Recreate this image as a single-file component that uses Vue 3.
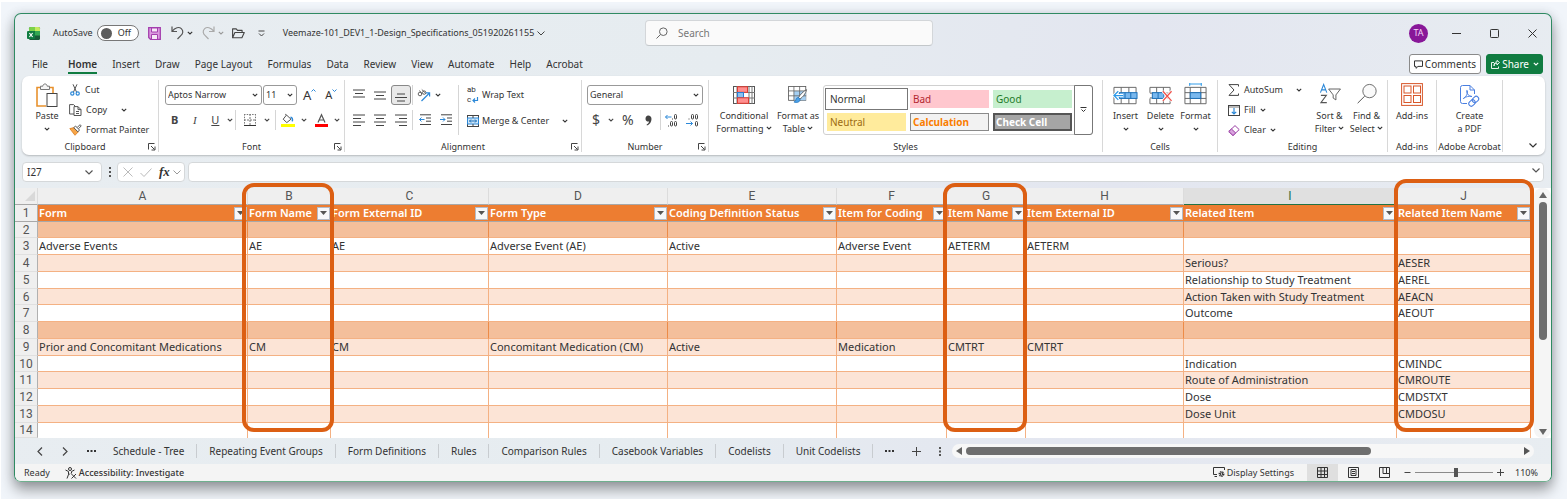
<script setup>
import { h, ref } from 'vue'

const Chev = () =>
  h('svg', { class: 'chev', viewBox: '0 0 6 4', width: 6, height: 4, 'aria-hidden': 'true' }, [
    h('path', { d: 'M.8.8 3 3 5.2.8', fill: 'none', stroke: 'currentColor', 'stroke-width': 1.1 }),
  ])

const Launcher = () =>
  h('svg', { class: 'launcher', viewBox: '0 0 8 8', width: 8, height: 8, 'aria-hidden': 'true' }, [
    h('path', { d: 'M.5 6.5v-6h6M3 3l3.500 3.500M7 3.500V7H3.500', fill: 'none', stroke: '#444', 'stroke-width': 1 }),
  ])

const ribbonTabs = ['File', 'Home', 'Insert', 'Draw', 'Page Layout', 'Formulas', 'Data', 'Review', 'View', 'Automate', 'Help', 'Acrobat']
const activeTab = ref('Home')
const autoSave = ref(false)
const zoom = ref(110)

const vertical = [
  { name: 'Top Align', d: 'M0 2h12M2 5.500h8M0 9h12', on: false },
  { name: 'Middle Align', d: 'M0 4h12M2 7.500h8M0 11h12', on: false },
  { name: 'Bottom Align', d: 'M2 6h8M0 9.500h12M2 13h8', on: true },
]
const horizontal = [
  { name: 'Align Left', d: 'M0 2h12M0 5.500h8M0 9h12M0 12.500h8' },
  { name: 'Center', d: 'M0 2h12M2 5.500h8M0 9h12M2 12.500h8' },
  { name: 'Align Right', d: 'M0 2h12M4 5.500h8M0 9h12M4 12.500h8' },
]
const cellStyles = ['Normal', 'Bad', 'Good', 'Neutral', 'Calculation', 'Check Cell']

const columns = [
  { id: 'A', title: 'Form', width: 210 },
  { id: 'B', title: 'Form Name', width: 83, mark: true },
  { id: 'C', title: 'Form External ID', width: 158 },
  { id: 'D', title: 'Form Type', width: 179 },
  { id: 'E', title: 'Coding Definition Status', width: 169 },
  { id: 'F', title: 'Item for Coding', width: 110 },
  { id: 'G', title: 'Item Name', width: 79, mark: true },
  { id: 'H', title: 'Item External ID', width: 158 },
  { id: 'I', title: 'Related Item', width: 213 },
  { id: 'J', title: 'Related Item Name', width: 134, mark: true },
]
const rows = [
  { n: 2, tone: 'dark' },
  { n: 3, tone: 'plain', A: 'Adverse Events', B: 'AE', C: 'AE', D: 'Adverse Event (AE)', E: 'Active', F: 'Adverse Event', G: 'AETERM', H: 'AETERM' },
  { n: 4, tone: 'band', I: 'Serious?', J: 'AESER' },
  { n: 5, tone: 'plain', I: 'Relationship to Study Treatment', J: 'AEREL' },
  { n: 6, tone: 'band', I: 'Action Taken with Study Treatment', J: 'AEACN' },
  { n: 7, tone: 'plain', I: 'Outcome', J: 'AEOUT' },
  { n: 8, tone: 'dark' },
  { n: 9, tone: 'band', A: 'Prior and Concomitant Medications', B: 'CM', C: 'CM', D: 'Concomitant Medication (CM)', E: 'Active', F: 'Medication', G: 'CMTRT', H: 'CMTRT' },
  { n: 10, tone: 'plain', I: 'Indication', J: 'CMINDC' },
  { n: 11, tone: 'band', I: 'Route of Administration', J: 'CMROUTE' },
  { n: 12, tone: 'plain', I: 'Dose', J: 'CMDSTXT' },
  { n: 13, tone: 'band', I: 'Dose Unit', J: 'CMDOSU' },
  { n: 14, tone: 'last' },
]
const sheets = ['Schedule - Tree', 'Repeating Event Groups', 'Form Definitions', 'Rules', 'Comparison Rules', 'Casebook Variables', 'Codelists', 'Unit Codelists']
</script>

<template>
  <div class="desk">
    <div class="window">
      <header class="titlebar">
        <div class="quick">
          <svg class="logo" viewBox="0 0 13 13" width="13" height="13" aria-hidden="true">
            <rect x="2" width="11" height="13" rx="1.500" fill="#185c37" />
            <path d="M2 1.500Q2 0 3.500 0H8v4H2z" fill="#7bd14a" />
            <path d="M8 0h3.500Q13 0 13 1.500V4H8z" fill="#c4ea5e" />
            <path d="M8 4h5v4.500H8z" fill="#33a852" />
            <rect y="4" width="8" height="8" rx="1" fill="#107c41" />
            <path d="M2.400 6l3.200 4M5.600 6l-3.200 4" stroke="#fff" stroke-width="1.200" />
          </svg>
          <label class="autosave">AutoSave
            <span class="switch"><input v-model="autoSave" type="checkbox" role="switch" /><i></i><b>{{ autoSave ? 'On' : 'Off' }}</b></span>
          </label>
          <button class="save" aria-label="Save">
            <svg viewBox="0 0 13 13" width="13" height="13"><path d="M.7.700h11.600v11.600H2.500L.7 10.500z" fill="#dc9be0" stroke="#a43fae" stroke-width="1.300" /><path d="M3.500 1h6v4h-6z" fill="#f6e8f7" stroke="#a43fae" /><path d="M3.500 12V7.500h6V12" fill="#f6e8f7" stroke="#a43fae" /></svg>
          </button>
          <button class="undo" aria-label="Undo">
            <svg viewBox="0 0 13 14" width="13" height="14"><path d="M1 .5v5h5M1.300 5.200C4 1.500 8 .5 10.300 2.600c2.500 2.300 1.500 5.200-.3 6.800L6.500 13" fill="none" stroke="#555" stroke-width="1.200" /></svg>
            <Chev />
          </button>
          <button class="redo" aria-label="Redo">
            <svg viewBox="0 0 13 14" width="13" height="14"><path d="M12 .5v5H7M11.700 5.200C9 1.500 5 .5 2.700 2.600.2 4.900 1.200 7.800 3 9.400L6.500 13" fill="none" stroke="#aaa" stroke-width="1.200" /></svg>
            <Chev />
          </button>
          <button class="open" aria-label="Open">
            <svg viewBox="0 0 13 11" width="13" height="11"><path d="M.6 9.800V.9h3.600l1.300 1.500h4.600v2.100M.6 9.800l2.300-5.300h9.400l-2.400 5.300z" fill="none" stroke="#444" stroke-width="1.100" stroke-linejoin="round" /></svg>
          </button>
          <button class="more" aria-label="Customize Quick Access Toolbar">
            <svg viewBox="0 0 7 7" width="7" height="7"><path d="M.5 1h6M1 3.500 3.500 6 6 3.500" fill="none" stroke="#444" /></svg>
          </button>
          <button class="file">Veemaze-101_DEV1_1-Design_Specifications_051920261155
            <svg viewBox="0 0 8 5" width="8" height="5"><path d="M.5.500 4 4 7.500.500" fill="none" stroke="#444" /></svg>
          </button>
        </div>
        <label class="search">
          <svg viewBox="0 0 12 12" width="12" height="12"><circle cx="7.300" cy="4.700" r="3.800" fill="none" stroke="#666" /><path d="M4.500 7.500.500 11.500" stroke="#666" /></svg>
          <input type="text" placeholder="Search" aria-label="Search" />
        </label>
        <div class="controls">
          <button class="avatar">TA</button>
          <button aria-label="Minimize"><svg viewBox="0 0 9 9" width="9" height="9"><path d="M0 4.500h9" stroke="#333" /></svg></button>
          <button aria-label="Maximize"><svg viewBox="0 0 9 9" width="9" height="9"><rect x=".5" y=".5" width="8" height="8" rx=".8" fill="none" stroke="#333" /></svg></button>
          <button aria-label="Close"><svg viewBox="0 0 9 9" width="9" height="9"><path d="M.5.500l8 8M8.500.500l-8 8" stroke="#333" /></svg></button>
        </div>
      </header>

      <nav class="tabs">
        <button v-for="t in ribbonTabs" :key="t" :class="{ active: t === activeTab }" @click="activeTab = t">{{ t }}</button>
        <button class="comments">
          <svg viewBox="0 0 9 9" width="9" height="9"><path d="M.5.900h8v5.500H4L2 8.300V6.400H.5z" fill="none" stroke="#333" /></svg>Comments
        </button>
        <button class="share">
          <svg viewBox="0 0 9 9" width="9" height="9"><path d="M3 2.500H.5v6h7V6.500M3 6c.2-2 1.200-2.800 3-2.800V5l2.500-2.500L6 .4v1.500C3.800 1.900 3 3.500 3 6z" fill="none" stroke="#fff" stroke-width=".9" /></svg>Share<Chev />
        </button>
      </nav>

      <section class="ribbon">
        <div class="group clipboard">
          <div class="body">
            <button class="big">
              <svg viewBox="0 0 24 26" width="24" height="26"><path d="M7 4.500H2V23h9" fill="#fff" stroke="#e8912d" stroke-width="1.600" /><path d="M13 4.500h5V10" fill="none" stroke="#e8912d" stroke-width="1.600" /><path d="M5.500 3.200h2.300C8 .2 12 .2 12.200 3.200h2.300v3.300h-9z" fill="#f5f5f5" stroke="#777" /><rect x="12" y="10.500" width="10" height="13" fill="#fff" stroke="#444" /></svg>
              <span>Paste</span><Chev />
            </button>
            <div class="stack">
              <button><svg viewBox="0 0 12 12" width="12" height="12"><path d="M4 .3 7.500 8M8 .3 4.500 8" stroke="#555" fill="none" /><circle cx="3.300" cy="9.500" r="1.600" fill="none" stroke="#2b88d8" stroke-width="1.200" /><circle cx="8.700" cy="9.500" r="1.600" fill="none" stroke="#2b88d8" stroke-width="1.200" /></svg>Cut</button>
              <button><svg viewBox="0 0 13 12" width="13" height="12"><path d="M5 10H.6V.6h4l2 2M5 2.600h4l3 3v5.900H5zM9 2.600v3h3M7 7.500h3M7 9.500h3" fill="none" stroke="#555" /></svg>Copy<Chev class="far" /></button>
              <button><svg viewBox="0 0 13 12" width="13" height="12"><path d="M.8 4.600 5 3.600l4.300 4.200L6 11.300z" fill="#f7a649" stroke="#d97a1b" stroke-width=".8" /><path d="M4.800 3.700 6.500 2l4 4-1.600 1.800zM8.300 3.400 11 .7l1.200 1.200-2.500 2.700" fill="#fff" stroke="#444" stroke-width=".9" /></svg>Format Painter</button>
            </div>
          </div>
          <div class="name">Clipboard</div><Launcher />
        </div>

        <div class="group font">
          <div class="body">
            <div class="line">
              <span class="pick face"><select aria-label="Font"><option>Aptos Narrow</option></select><Chev /></span>
              <span class="pick size"><select aria-label="Font Size"><option>11</option></select><Chev /></span>
              <button class="grow" aria-label="Increase Font Size"><span>A</span><svg viewBox="0 0 5 3" width="5" height="3"><path d="M.5 2.500l2-2 2 2" fill="none" stroke="#2b88d8" /></svg></button>
              <button class="shrink" aria-label="Decrease Font Size"><span>A</span><svg viewBox="0 0 5 3" width="5" height="3"><path d="M.5.500l2 2 2-2" fill="none" stroke="#2b88d8" /></svg></button>
            </div>
            <div class="line marks">
              <button class="glyph"><b>B</b></button>
              <button class="glyph"><i>I</i></button>
              <button class="glyph"><u>U</u><Chev /></button>
              <hr />
              <button class="glyph" aria-label="Borders"><svg viewBox="0 0 12 12" width="12" height="12"><path d="M.5 0v12M11.500 0v12M0 .5h12" stroke="#777" stroke-dasharray="1.500 1.200" /><path d="M6 0v12M0 6h12" stroke="#777" stroke-dasharray="2 1" /><path d="M0 11.500h12" stroke="#333" stroke-width="1.200" /></svg><Chev /></button>
              <hr />
              <button class="glyph" aria-label="Fill Color"><svg viewBox="0 0 14 13" width="14" height="13"><path d="M5.500 1 10 5.200 5.800 8.600 2.200 5.200zM5.500 1 4.200.2" fill="#fff" stroke="#555" /><path d="M9.500 3.200c1.800.3 2.300 1.800 1.800 4.200" fill="none" stroke="#2b88d8" stroke-width="1.500" /><rect y="10" width="14" height="3" fill="#ff0" /></svg><Chev /></button>
              <button class="glyph" aria-label="Font Color"><svg viewBox="0 0 13 13" width="13" height="13"><path d="M3 8.500 6.500.700 10 8.500M4.200 6h4.600" fill="none" stroke="#555" stroke-width="1.200" /><rect y="10" width="13" height="3" fill="#f00" /></svg><Chev /></button>
            </div>
          </div>
          <div class="name">Font</div><Launcher />
        </div>

        <div class="group align">
          <div class="body">
            <div class="pad">
              <button v-for="a in vertical" :key="a.name" class="tool" :class="{ on: a.on }" :aria-label="a.name"><svg viewBox="0 0 12 14" width="12" height="14"><path :d="a.d" stroke="#444" /></svg></button>
              <hr />
              <button class="tool wide" aria-label="Orientation"><svg viewBox="0 0 14 13" width="14" height="13"><g fill="none" stroke="#555" stroke-width=".9"><circle cx="3" cy="5" r="1.800" /><path d="M2.500 1.500 5 5" /><path d="M4.800.500l3.700 3.700" /><circle cx="7.200" cy="3.600" r="1.700" /></g><path d="M4.500 12 12.500 4M9 3.800h3.600v3.600" fill="none" stroke="#2b88d8" stroke-width="1.200" /></svg><Chev /></button>
              <button v-for="a in horizontal" :key="a.name" class="tool" :aria-label="a.name"><svg viewBox="0 0 12 14" width="12" height="14"><path :d="a.d" stroke="#444" /></svg></button>
              <hr />
              <div class="indents">
                <button class="tool" aria-label="Decrease Indent"><svg viewBox="0 0 12 12" width="12" height="12"><path d="M1 .8h11M7 4h5M7 7.200h5M1 10.500h11" stroke="#444" /><path d="M.5 5.500h5M2.500 3.500l-2 2 2 2" fill="none" stroke="#2b88d8" /></svg></button>
                <button class="tool" aria-label="Increase Indent"><svg viewBox="0 0 12 12" width="12" height="12"><path d="M1 .8h11M7 4h5M7 7.200h5M1 10.500h11" stroke="#444" /><path d="M0 5.500h5M3 3.500l2 2-2 2" fill="none" stroke="#2b88d8" /></svg></button>
              </div>
            </div>
            <hr class="tall" />
            <div class="wraps">
              <button><span class="abc"><span>ab</span><span class="turn">c<svg viewBox="0 0 7 6" width="7" height="6"><path d="M5.500 0v3.500H1M3 1.500l-2 2 2 2" fill="none" stroke="#2b88d8" stroke-width="1.200" /></svg></span></span>Wrap Text</button>
              <button><svg viewBox="0 0 12 12" width="12" height="12"><rect x=".5" y=".5" width="11" height="11" fill="#fff" stroke="#444" /><rect x=".5" y="3" width="11" height="6" fill="#cfe6f8" stroke="#2b88d8" /><path d="M6 0v3M6 9v3" stroke="#444" /><path d="M2.500 6h7M4 4.500 2.500 6 4 7.500M8 4.500 9.500 6 8 7.500" fill="none" stroke="#1a6fb8" /></svg>Merge &amp; Center<Chev class="far" /></button>
            </div>
          </div>
          <div class="name">Alignment</div><Launcher />
        </div>

        <div class="group number">
          <div class="body">
            <span class="pick"><select aria-label="Number Format"><option>General</option></select><Chev /></span>
            <div class="line marks">
              <button class="sign">$</button><Chev />
              <button class="sign">%</button>
              <button class="sign comma" aria-label="Comma Style"><svg viewBox="0 0 7 11" width="7" height="11"><path d="M3.200.500c2 0 3.300 1.200 3.300 3.500 0 3-1.700 5.300-4.500 6.500l-.5-.8c1.500-.8 2.400-1.900 2.500-3.200-2 .4-3.500-.8-3.500-2.800C.5 1.800 1.600.500 3.200.500z" fill="#444" /></svg></button>
              <hr />
              <button class="deci" aria-label="Increase Decimal"><svg viewBox="0 0 13 13" width="13" height="13"><g fill="none" stroke="#444"><rect x="9.500" y=".5" width="2" height="4.500" rx="1" /><rect x="5.500" y="7.500" width="2" height="4.500" rx="1" /><rect x="9.500" y="7.500" width="2" height="4.500" rx="1" /><path d="M7 5h1M3 12h1" /></g><path d="M6.500 3h-6M2.500 1l-2 2 2 2" fill="none" stroke="#2b88d8" /></svg></button>
              <button class="deci" aria-label="Decrease Decimal"><svg viewBox="0 0 13 13" width="13" height="13"><g fill="none" stroke="#444"><rect x="5.500" y=".5" width="2" height="4.500" rx="1" /><rect x="9.500" y=".5" width="2" height="4.500" rx="1" /><rect x="9.500" y="7.500" width="2" height="4.500" rx="1" /><path d="M2.500 5h1" /></g><path d="M0 9.500h6.500M4.500 7.500l2 2-2 2" fill="none" stroke="#2b88d8" /></svg></button>
            </div>
          </div>
          <div class="name">Number</div><Launcher />
        </div>

        <div class="group styles">
          <div class="body">
            <button class="big two">
              <svg viewBox="0 0 22 18" width="22" height="18"><rect x=".5" y=".5" width="21" height="17" fill="#fff" stroke="#555" /><path d="M0 6.500h22M0 12h22M16 0v18M19 0v18M4 0v18" stroke="#777" /><rect x="4.500" y=".8" width="10" height="5.500" fill="#ff8f8f" stroke="#e03c32" /><rect x="4.500" y="6.500" width="6" height="5" fill="#8cc1ee" stroke="#2b7cd3" /><rect x="4.500" y="11.800" width="11" height="5.500" fill="#ff8f8f" stroke="#e03c32" /></svg>
              <span>Conditional<br />Formatting <Chev /></span>
            </button>
            <button class="big two">
              <svg viewBox="0 0 24 22" width="24" height="22"><rect x=".5" y=".5" width="21" height="17" fill="#fff" stroke="#555" /><rect x="7" y="6" width="14.500" height="11.500" fill="#a5cff2" /><path d="M0 6h22M0 12h22M7 0v18M14 0v18" stroke="#666" /><path d="M22.500 4.500c-4 2-8 6-10 10l1.800 1.500c3.700-2.500 7-6.500 8.200-11.500z" fill="#fff" stroke="#444" stroke-width=".9" /><path d="M12.500 14.200c-2.500-.3-3 1.800-3.300 3.300-.3 1-1.200 1.700-2.200 2 3.500 1.500 7.500.5 7.600-3.300z" fill="#4ba0e8" stroke="#1a6fb8" stroke-width=".8" /></svg>
              <span>Format as<br />Table <Chev /></span>
            </button>
            <div class="gallery">
              <div class="swatches"><button v-for="s in cellStyles" :key="s" :class="s.toLowerCase().replace(' ', '-')">{{ s }}</button></div>
              <button class="expand" aria-label="More styles"><svg viewBox="0 0 7 6" width="7" height="6"><path d="M.5.500h6M1.500 2.500l2 2 2-2" fill="none" stroke="#333" /></svg></button>
            </div>
          </div>
          <div class="name">Styles</div>
        </div>

        <div class="group cells">
          <div class="body">
            <button class="big">
              <svg viewBox="0 0 25 26" width="25" height="26"><path d="M.5 3.500h23v17H.5zM8 3.500v17M16 3.500v17" fill="#fff" stroke="#666" /><rect x="6" y="9" width="18.500" height="6" fill="#79b8ee" stroke="#1a6fb8" /><path d="M12 9v6M18 9v6" stroke="#1a6fb8" /><path d="M10 12H1M5 7.500.500 12 5 16.500" fill="none" stroke="#fff" stroke-width="3" /><path d="M10 12H1M5 7.500.500 12 5 16.500" fill="none" stroke="#2b99e8" stroke-width="1.300" /></svg>
              <span>Insert</span><Chev />
            </button>
            <button class="big">
              <svg viewBox="0 0 25 26" width="25" height="26"><path d="M1.500 3.500h21v17h-21zM8.500 3.500v17M15.500 3.500v17" fill="#fff" stroke="#666" /><path d="M0 9h25v6H0z" fill="#fff" /><path d="M1.500 9.500h21M1.500 14.500h21" stroke="#666" /><rect x="4" y="9" width="12" height="6" fill="#79b8ee" stroke="#1a6fb8" /><path d="M10 9v6" stroke="#1a6fb8" /><path d="M15 7.500l9 10M24 7.500l-9 10" stroke="#fff" stroke-width="3" /><path d="M15 7.500l9 10M24 7.500l-9 10" stroke="#f0504a" stroke-width="1.300" /></svg>
              <span>Delete</span><Chev />
            </button>
            <button class="big">
              <svg viewBox="0 0 25 26" width="25" height="26"><path d="M1.500 3.500h22v17h-22zM7 3.500v17M18 3.500v17M1.500 9h22M1.500 15h22" fill="#fff" stroke="#666" /><rect x="7" y="9" width="11" height="6" fill="#79b8ee" stroke="#1a6fb8" /><path d="M6 0h13M6.500-1v3M18.500-1v3" stroke="#2b99e8" /></svg>
              <span>Format</span><Chev />
            </button>
          </div>
          <div class="name">Cells</div>
        </div>

        <div class="group editing">
          <div class="body">
            <div class="stack">
              <button><svg viewBox="0 0 12 12" width="12" height="12"><path d="M10.500 2.500V.6H1l5 5.400-5 5.400h9.500V9.500" fill="none" stroke="#444" /></svg>AutoSum<Chev class="far" /></button>
              <button><svg viewBox="0 0 12 11" width="12" height="11"><rect x=".5" y=".5" width="11" height="10" fill="#fff" stroke="#444" /><path d="M1 2h10" stroke="#777" /><path d="M6 3v6M3.800 6.800 6 9l2.200-2.200" fill="none" stroke="#2b88d8" stroke-width="1.200" /></svg>Fill<Chev /></button>
              <button><svg viewBox="0 0 12 11" width="12" height="11"><path d="M.8 6.500 7 .6l4.200 4L5 10.500z" fill="#fff" stroke="#9b3fa5" /><path d="M.8 6.500 3.500 4l4.200 4L5 10.500z" fill="#d9a3de" stroke="#9b3fa5" /></svg>Clear<Chev /></button>
            </div>
            <button class="big two">
              <svg viewBox="0 0 24 22" width="24" height="22"><path d="M1.500 9.500 5 .6l3.500 8.900M2.800 6.500h4.400" fill="none" stroke="#2b88d8" stroke-width="1.200" /><path d="M2 12.500h6L2 20.500h6.500" fill="none" stroke="#555" stroke-width="1.200" /><path d="M10.500 5.500h13L18.500 12v5.500l-3-2V12z" fill="#fff" stroke="#555" /></svg>
              <span>Sort &amp;<br />Filter <Chev /></span>
            </button>
            <button class="big two">
              <svg viewBox="0 0 24 24" width="24" height="24"><circle cx="15" cy="8.500" r="8" fill="#fafafa" stroke="#555" /><path d="M9.300 14.500.800 23" stroke="#555" stroke-width="1.200" /></svg>
              <span>Find &amp;<br />Select <Chev /></span>
            </button>
          </div>
          <div class="name">Editing</div>
        </div>

        <div class="group addins">
          <div class="body">
            <button class="big two">
              <svg viewBox="0 0 22 23" width="22" height="23"><g fill="#fff" stroke="#d8572a"><rect x=".6" y=".6" width="20.800" height="21.800" /><rect x="3" y="3" width="7" height="7" /><rect x="12.500" y="3" width="7" height="7" /><rect x="3" y="12.500" width="7" height="7" /><rect x="12.500" y="12.500" width="7" height="7" /></g></svg>
              <span>Add-ins</span>
            </button>
          </div>
          <div class="name">Add-ins</div>
        </div>

        <div class="group acrobat">
          <div class="body">
            <button class="big two">
              <svg viewBox="0 0 22 23" width="22" height="23"><g fill="none" stroke="#4a7fe0"><path d="M8 18.500H3.500q-2 0-2-2V2.500q0-2 2-2H11l4.500 4.500v4M11 .5v4.500h4.500" /><path d="M4.500 13.500c2.500-1.500 4.500-5 4-7.500-.2-1-1.200-.8-1 .3.400 2.700 2 4.700 5.500 5.200-3.500-.6-6 .3-8 1.500-1 .6-1 1-.5.500z" stroke-width=".9" /><rect x="14" y="11" width="5" height="7" rx="2.500" transform="rotate(45 16.500 14.500)" /><rect x="10.500" y="14.500" width="5" height="7" rx="2.500" transform="rotate(45 13 18)" /></g></svg>
              <span>Create<br />a PDF</span>
            </button>
          </div>
          <div class="name">Adobe Acrobat</div>
        </div>
        <button class="collapse" aria-label="Collapse the Ribbon"><svg viewBox="0 0 8 5" width="8" height="5"><path d="M.5.500 4 4 7.500.500" fill="none" stroke="#333" stroke-width="1.200" /></svg></button>
      </section>

      <section class="formula">
        <label class="namebox"><input type="text" value="I27" aria-label="Name Box" /><svg viewBox="0 0 8 5" width="8" height="5"><path d="M.5.500 4 4 7.500.500" fill="none" stroke="#555" stroke-width="1.200" /></svg></label>
        <svg class="dots" viewBox="0 0 15 10" width="15" height="10"><path d="M7 0h2v2H7zM7 4h2v2H7zM7 8h2v2H7z" fill="#555" /></svg>
        <div class="fx">
          <button aria-label="Cancel"><svg viewBox="0 0 10 10" width="10" height="10"><path d="M.5.500l9 9M9.500.500l-9 9" stroke="#bbb" /></svg></button>
          <button aria-label="Enter"><svg viewBox="0 0 12 9" width="12" height="9"><path d="M.5 5l3.500 3.500L11.500.500" fill="none" stroke="#bbb" /></svg></button>
          <button class="fn" aria-label="Insert Function"><i>fx</i><svg viewBox="0 0 8 5" width="8" height="5"><path d="M.5.500 4 4 7.500.500" fill="none" stroke="#999" /></svg></button>
        </div>
        <label class="entry"><input type="text" aria-label="Formula Bar" /><svg viewBox="0 0 8 5" width="8" height="5"><path d="M.5.500 4 4 7.500.500" fill="none" stroke="#555" stroke-width="1.200" /></svg></label>
      </section>

      <section class="sheet">
        <table>
          <colgroup>
            <col class="gutter" />
            <col v-for="c in columns" :key="c.id" :style="{ width: c.width + 'px' }" />
            <col class="rest" />
          </colgroup>
          <thead>
            <tr class="letters">
              <th class="corner"><svg viewBox="0 0 10 10" width="10" height="10"><path d="M10 0v10H0z" fill="#d9d9d9" /></svg></th>
              <th v-for="c in columns" :key="c.id" scope="col" :class="{ picked: c.id === 'I' }">{{ c.id }}<span v-if="c.mark" class="mark" :class="'mark-' + c.id.toLowerCase()"></span></th>
              <th></th>
            </tr>
          </thead>
          <tbody>
            <tr class="titles">
              <th scope="row">1</th>
              <td v-for="c in columns" :key="c.id"><div class="cap">{{ c.title }}<button :aria-label="'Filter ' + c.title"><svg viewBox="0 0 7 4" width="7" height="4"><path d="M0 0h7L3.500 4z" fill="#555" /></svg></button></div></td>
              <td class="blank"></td>
            </tr>
            <tr v-for="r in rows" :key="r.n" :class="r.tone">
              <th scope="row">{{ r.n }}</th>
              <td v-for="c in columns" :key="c.id">{{ r[c.id] }}</td>
              <td class="blank"></td>
            </tr>
          </tbody>
        </table>
        <div class="vbar">
          <svg viewBox="0 0 8 6" width="8" height="6"><path d="M4 0l4 6H0z" fill="#666" /></svg>
          <div class="track"><div class="thumb"></div></div>
          <svg viewBox="0 0 8 6" width="8" height="6"><path d="M4 6l4-6H0z" fill="#666" /></svg>
        </div>
      </section>

      <section class="sheets">
        <div class="nav">
          <button aria-label="Previous sheet"><svg viewBox="0 0 6 9" width="6" height="9"><path d="M5 .5l-4 4 4 4" fill="none" stroke="#444" stroke-width="1.200" /></svg></button>
          <button aria-label="Next sheet"><svg viewBox="0 0 6 9" width="6" height="9"><path d="M1 .5l4 4-4 4" fill="none" stroke="#444" stroke-width="1.200" /></svg></button>
          <button aria-label="More sheets to the left"><svg viewBox="0 0 9 2" width="9" height="2"><path d="M0 0h2v2H0zM3.500 0h2v2h-2zM7 0h2v2H7z" fill="#333" /></svg></button>
        </div>
        <button v-for="s in sheets" :key="s" class="leaf">{{ s }}</button>
        <div class="tail">
          <button aria-label="More sheets"><svg viewBox="0 0 9 2" width="9" height="2"><path d="M0 0h2v2H0zM3.500 0h2v2h-2zM7 0h2v2H7z" fill="#333" /></svg></button>
          <button aria-label="New sheet"><svg viewBox="0 0 9 9" width="9" height="9"><path d="M4.500 0v9M0 4.500h9" stroke="#444" /></svg></button>
          <svg viewBox="0 0 2 9" width="2" height="9"><path d="M0 0h2v2H0zM0 3.500h2v2H0zM0 7h2v2H0z" fill="#555" /></svg>
        </div>
        <div class="hbar">
          <svg viewBox="0 0 6 8" width="6" height="8"><path d="M0 4l6-4v8z" fill="#666" /></svg>
          <div class="track"><div class="thumb"></div></div>
          <svg viewBox="0 0 6 8" width="6" height="8"><path d="M6 4L0 0v8z" fill="#555" /></svg>
        </div>
      </section>

      <footer class="status">
        <span>Ready</span>
        <button class="check"><svg viewBox="0 0 12 12" width="12" height="12"><g fill="none" stroke="#333"><circle cx="5" cy="2" r="1.500" /><path d="M.5 3l3 1.500v3L2 11.500M9.500 3l-3 1.500v2M3.500 8 5 6.500M6.500 7l4.500 4.500M11 7l-4.500 4.500" /></g></svg>Accessibility: Investigate</button>
        <button class="display"><svg viewBox="0 0 12 11" width="12" height="11"><path d="M4 7.500H.5v-7h11V3M1.500 9.500H4" fill="none" stroke="#333" /><circle cx="8.500" cy="7" r="2.200" fill="none" stroke="#333" stroke-width="1.500" stroke-dasharray="1.300 .7" /><circle cx="8.500" cy="7" r="1.200" fill="none" stroke="#333" /></svg>Display Settings</button>
        <button class="view on" aria-label="Normal"><svg viewBox="0 0 11 11" width="11" height="11"><path d="M.5.500h10v10H.5zM4 0v11M7.500 0v11M0 4h11M0 7.500h11" fill="none" stroke="#333" /></svg></button>
        <button class="view" aria-label="Page Layout"><svg viewBox="0 0 11 11" width="11" height="11"><path d="M.5.500h10v10H.5zM3 2.500h5v6H3zM4 4.500h3M4 6.500h3" fill="none" stroke="#333" /></svg></button>
        <button class="view" aria-label="Page Break Preview"><svg viewBox="0 0 11 11" width="11" height="11"><path d="M.5.500h10v10H.5zM4 0v6.500h7M7.500 0v6.500" fill="none" stroke="#333" /></svg></button>
        <button class="step" aria-label="Zoom Out"><svg viewBox="0 0 7 7" width="7" height="7"><path d="M.5 3.500h6" stroke="#444" /></svg></button>
        <input v-model="zoom" type="range" min="10" max="200" aria-label="Zoom" />
        <button class="step" aria-label="Zoom In"><svg viewBox="0 0 7 7" width="7" height="7"><path d="M0 3.500h7M3.500 0v7" stroke="#444" /></svg></button>
        <span class="percent">{{ zoom }}%</span>
      </footer>
    </div>
  </div>
</template>

<style>
body { margin: 0; background: #fff; }
</style>

<style scoped>
.desk { margin: 2px 0 1px 1px; padding: 11px 15px 17px 13px; background: #f1f5fa; overflow: hidden; font: 9px/12px "Noto Sans", "Open Sans", sans-serif; color: #333; }
.window { border: 1px solid #2f8a62; border-bottom-color: #6fb08e; border-radius: 7px; overflow: hidden; background: linear-gradient(100deg, #e8edf1 0%, #e6ecf0 45%, #e3e6f0 70%, #e8edf1 100%); box-shadow: 0 8px 14px rgba(0, 0, 0, .36), 0 0 10px rgba(60, 80, 100, .16); }
button { appearance: none; border: 0; padding: 0; margin: 0; background: none; font: inherit; color: inherit; white-space: nowrap; }
input, select { font: inherit; color: inherit; }
svg { display: block; flex: none; overflow: visible; }
hr { border: 0; margin: 0; width: 1px; background: #d5d5d5; align-self: stretch; }

.titlebar { display: grid; grid-template-columns: 630fr 288fr 618fr; align-items: center; height: 36px; }
.quick { display: flex; align-items: center; padding-left: 12px; height: 38px; }
.autosave { display: flex; align-items: center; gap: 4px; margin-left: 13px; }
.switch { position: relative; display: flex; align-items: center; width: 40px; height: 14px; border: 1px solid #777; border-radius: 8px; background: #fff; }
.switch input { position: absolute; inset: 0; margin: 0; opacity: 0; }
.switch i { width: 11px; height: 11px; margin-left: 3px; border-radius: 50%; background: #5c5c5c; }
.switch b { margin-left: 6px; font-weight: 400; }
.save { margin-left: 9px; }
.undo, .redo { display: flex; align-items: center; gap: 3px; margin-left: 10px; }
.redo { color: #999; margin-left: 9px; }
.open { margin-left: 8px; }
.more { margin-left: 13px; }
.file { display: flex; align-items: center; gap: 3px; margin-left: 18px; }
.search { display: flex; align-items: center; gap: 10px; height: 24px; padding-left: 10px; border: 1px solid #d3d6d9; border-bottom-color: #c3c7ca; border-radius: 4px; background: #fafafa; }
.search input { flex: 1; min-width: 0; border: 0; padding: 0; background: none; outline: 0; font-size: 10px; }
.search input::placeholder { color: #777; opacity: 1; }
.controls { display: flex; justify-content: flex-end; align-items: center; gap: 29px; padding-right: 14px; height: 38px; }
.avatar { width: 19px; height: 19px; border-radius: 50%; background: #881798; color: #f2d5f5; margin-right: -5px; }

.tabs { display: flex; align-items: center; gap: 15px; height: 26px; padding: 2px 8px 0 17px; box-sizing: border-box; font-size: 10px; }
.tabs > button:first-child { margin-right: 5px; }
.tabs > button { line-height: 16px; border-bottom: 2px solid transparent; border-top: 2px solid transparent; }
.tabs > .active { font-weight: 600; border-bottom-color: #107c41; }
.tabs > .comments, .tabs > .share { display: flex; align-items: center; gap: 2px; box-sizing: border-box; height: 20px; padding: 0 4px; border: 1px solid #8a8a8a; border-radius: 3px; background: #fff; }
.tabs > .comments { margin-left: auto; }
.tabs > .share { margin-left: -10px; padding: 0 3px 0 4px; border-color: #107c41; background: #107c41; color: #fff; }
.share .chev { margin-left: 2px; }

.ribbon { display: flex; height: 79px; margin: 0 6px 0 7px; border-radius: 7px; background: #fff; box-shadow: 0 1px 2px rgba(0, 0, 0, .22); }
.group { position: relative; box-sizing: border-box; flex: 0 1 auto; height: 72px; margin-top: 4px; border-right: 1px solid #d8d8d8; }
.body { display: flex; height: 61px; }
.name { text-align: center; }
.launcher { position: absolute; right: 2px; bottom: 1px; }
.big { display: flex; flex-direction: column; align-items: center; }
.big > span { line-height: 13px; }
.big .chev { margin-top: 5px; }
.two .chev { display: inline-block; margin: 0 0 2px; }
.stack { display: flex; flex-direction: column; }
.stack button { display: flex; align-items: center; gap: 4px; height: 20px; }
.line { display: flex; align-items: center; height: 20px; }

.clipboard { width: 137px; }
.clipboard .big { width: 36px; margin: 3px 0 0 7px; }
.clipboard .stack { margin-left: 4px; }
.clipboard .stack .far { margin-left: 10px; }
.clipboard .name { padding-right: 10px; }

.pick { position: relative; display: flex; align-items: center; }
.pick select { appearance: none; width: 100%; height: 20px; box-sizing: border-box; padding: 0 2px; border: 1px solid #999; border-radius: 3px; background: #fff; }
.pick .chev { position: absolute; right: 4px; }
.font { width: 186px; }
.font .body { flex-direction: column; gap: 5px; padding: 5px 0 0 6px; box-sizing: border-box; }
.face { width: 97px; }
.size { width: 34px; margin-left: 1px; }
.grow, .shrink { display: flex; align-items: flex-start; margin-left: 6px; }
.grow span { font-size: 13px; }
.shrink { margin-left: 9px; }
.shrink span { font-size: 11px; }
.marks { color: #444; }
.glyph { display: flex; align-items: center; gap: 7px; font-size: 11px; }
.font .marks { gap: 8px; padding-left: 6px; }
.font .marks .glyph { gap: 8px; }
.font .marks > .glyph:nth-child(-n + 3) { margin-right: 5px; }
.font .marks > .glyph:nth-child(3) { margin-right: -3px; }
.font .marks > .glyph:nth-child(5) { margin-left: 3px; }
.font .marks > .glyph:nth-child(n + 7) { gap: 6px; }
.font .marks > hr { margin: 0 -3px; }
.font .marks i { font-family: "Liberation Serif", serif; width: 7px; text-align: center; }

.align { width: 237px; }
.pad { display: grid; grid-template-columns: 20px 20px 20px 1px 42px; grid-template-rows: 20px 20px; gap: 5px 1px; margin: 5px 0 0 4px; align-content: start; }
.tool { display: flex; align-items: center; justify-content: center; }
.tool.wide { gap: 4px; justify-content: flex-start; padding-left: 3px; }
.tool.on { box-sizing: border-box; border: 1px solid #888; border-radius: 3px; background: #e9e9e9; }
.indents { display: grid; grid-template-columns: 1fr 1fr; }
.tall { margin: 5px 0 6px 2px; }
.wraps { display: flex; flex-direction: column; padding: 5px 0 0 8px; gap: 6px; }
.wraps button { display: flex; align-items: center; gap: 3px; height: 20px; }
.wraps .far { margin-left: 10px; }
.abc { display: flex; flex-direction: column; width: 12px; font: 8px/10px Roboto, sans-serif; text-align: left; }
.turn { display: flex; align-items: center; gap: 1px; }

.number { width: 127px; }
.number .body { flex-direction: column; gap: 5px; padding: 5px 5px 0; box-sizing: border-box; }
.number .marks { padding-left: 5px; gap: 8px; }
.number .marks hr { margin-right: -4px; }
.sign { font-size: 14px; }
.sign.comma { margin-left: 3px; }

.styles { width: 394px; }
.styles .two { width: 60px; padding-top: 6px; box-sizing: border-box; margin-left: 5px; }
.styles .two + .two { width: 48px; margin-left: 0; }
.styles .two svg:first-child { height: 18px; margin-bottom: 5px; }
.gallery { display: flex; height: 50px; margin: 5px 0 0 1px; box-sizing: border-box; border: 1px solid #d0d0d0; border-radius: 3px; }
.swatches { display: grid; grid-template-columns: 79px 79px 79px; grid-template-rows: 18px 18px; gap: 5px 4px; padding: 4px 3px; }
.swatches button { box-sizing: border-box; padding-left: 3px; text-align: left; font-size: 10px; }
.swatches .normal { outline: 1px solid #777; outline-offset: 1px; }
.bad { background: #ffc7ce; color: #b3262f; }
.good { background: #c6efce; color: #1e7b28; }
.neutral { background: #ffeb9c; color: #9c6a10; }
.swatches .calculation { border: 1px solid #8a8a8a; background: #f2f2f2; color: #fa7d00; font-weight: 700; padding-left: 2px; }
.swatches .check-cell { border: 2px solid #555; background: #a5a5a5; color: #fff; font-weight: 700; padding-left: 1px; }
.expand { display: flex; align-items: center; justify-content: center; width: 19px; margin: -1px; border: 1px solid #777; border-radius: 0 3px 3px 0; }

.cells { width: 115px; }
.cells .body { padding: 4px 0 0 5px; box-sizing: border-box; }
.cells .big { width: 35px; }
.cells .big > svg:first-child { height: 25px; }

.editing { width: 170px; }
.editing .stack { width: 83px; margin-left: 10px; }
.editing .far { margin-left: 9px; }
.editing .two { width: 37px; padding-top: 4px; box-sizing: border-box; }
.editing .two > svg:first-child { height: 20px; margin-bottom: 5px; }

.addins { width: 49px; }
.addins .body, .acrobat .body { justify-content: center; }
.addins .two { margin-top: 3px; }
.addins .two svg, .acrobat .two svg { margin-bottom: 3px; }
.acrobat { width: 66px; }
.acrobat .two { margin-top: 5px; }
.acrobat .two svg { margin-bottom: 1px; }
.acrobat .name, .addins .name { white-space: nowrap; }
.collapse { display: flex; align-items: center; align-self: flex-end; height: 20px; margin-left: auto; padding-right: 8px; }

.formula { display: flex; align-items: center; height: 20px; margin: 7px 7px 6px; }
.formula > label, .fx { box-sizing: border-box; height: 20px; display: flex; align-items: center; border: 1px solid #d5d8da; border-radius: 4px; background: #fff; }
.formula input { flex: 1; min-width: 0; border: 0; padding: 0; background: none; outline: 0; }
.namebox { width: 80px; padding: 0 8px 0 4px; font-size: 10px; }
.fx { width: 68px; padding: 0 1px 0 5px; gap: 7px; }
.fn { display: flex; align-items: center; gap: 3px; }
.fn i { font: italic 700 13px/16px "Liberation Serif", serif; }
.entry { flex: 1; margin-left: 3px; padding: 0 3px 3px 4px; }

.sheet { display: flex; background: #fff; }
table { flex: 1; table-layout: fixed; border-collapse: separate; border-spacing: 0; width: 100%; font-size: 11px; line-height: 14px; }
.gutter { width: 23px; }
.rest { width: 3px; }
tr { height: 17px; }
tbody tr:nth-child(4n + 2) { height: 16px; }
tbody tr:last-child { height: 15px; }
th, td { box-sizing: border-box; padding: 0 1px; height: inherit; overflow: hidden; white-space: nowrap; text-align: left; }
th { padding: 0; font-weight: 400; text-align: center; color: #555; background: #efefef; font-family: Roboto, sans-serif; font-size: 12px; }
.letters th { position: relative; overflow: visible; line-height: 16px; border-bottom: 1px solid #a8a8a8; border-right: 1px solid #dcdcdc; }
.letters .corner { padding-left: 10px; }
.letters .picked { background: #e0e0e0; color: #217346; border-bottom-color: #217346; }
tbody th { border-right: 1px solid #b0b0b0; border-bottom: 1px solid #e0e0e0; }
td { border-right: 1px solid #f4b183; border-bottom: 1px solid #f4b183; }
td.blank { border: 0; padding: 0; }
.titles td { background: #ed7d31; color: #fff; font-weight: 600; border-bottom-color: #a8a8a8; border-right-color: #ed7d31; }
.titles th { border-bottom-color: #a8a8a8; }
.dark td { background: #f4bf9b; border-right-color: #ed8b47; }
.band td { background: #fce4d6; }
.last td { border-bottom: 0; }
tr .blank.blank { background: #fff; }
.cap { display: flex; align-items: center; justify-content: space-between; height: 15px; }
.cap button { display: flex; align-items: center; justify-content: center; box-sizing: border-box; width: 13px; height: 13px; margin-right: -1px; border: 1px solid #b5bcc8; background: #f7f8fa; flex: none; }
.mark { position: absolute; z-index: 2; top: -5px; left: -6px; right: -4px; height: 249px; box-sizing: border-box; border: 4px solid #dc5f13; border-radius: 12px; pointer-events: none; }
.mark-g { left: -4px; right: -2px; }
.mark-j { top: -9px; height: 253px; left: -3px; }
.vbar { display: flex; flex-direction: column; align-items: center; gap: 4px; width: 11px; padding: 4px 3px 3px; background: #f5f5f5; border-radius: 8px; }
.vbar .track { flex: 1; width: 8px; }
.vbar .thumb { height: 62%; border-radius: 4px; background: #6e6e6e; }

.sheets { display: flex; align-items: center; height: 26px; font-size: 10px; padding-right: 17px; }
.nav { display: flex; align-items: center; gap: 19px; width: 86px; padding-left: 22px; box-sizing: border-box; }
.leaf { padding: 0 12px; line-height: 14px; border-right: 1px solid #c8ccd0; }
.tail { display: flex; align-items: center; gap: 18px; margin-left: 12px; }
.hbar { flex: 1; display: flex; align-items: center; gap: 4px; height: 14px; padding: 0 4px; margin-left: 11px; border-radius: 7px; background: #f7f7f7; }
.hbar .track { flex: 1; }
.hbar .thumb { width: 73%; height: 8px; border-radius: 4px; background: #6e6e6e; }

.status { display: flex; align-items: center; height: 17px; padding: 0 14px 0 9px; background: #f4f4f4; }
.status button { display: flex; align-items: center; gap: 2px; }
.check { margin-left: 15px; font-weight: 500; }
.display { margin-left: auto; }
.status .view { width: 31px; height: 17px; justify-content: center; }
.display + .view { margin-left: 13px; }
.status .on { background: #dfdfdf; }
.step { margin: 0 4px; }
.status input { appearance: none; width: 78px; height: 9px; margin: 0; background: linear-gradient(#8a8a8a, #8a8a8a) center / 100% 1px no-repeat; }
.status input::-webkit-slider-thumb { appearance: none; width: 4px; height: 9px; background: #555; }
.percent { width: 22px; margin-left: 7px; text-align: right; }
</style>
